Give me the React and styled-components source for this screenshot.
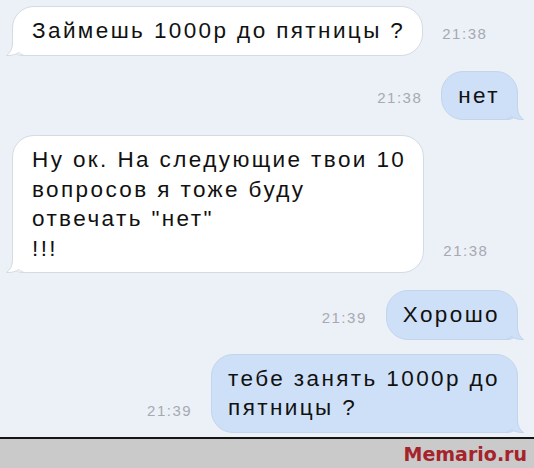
import React from 'react';
import styled, { createGlobalStyle } from 'styled-components';

const GlobalStyle = createGlobalStyle`
  html, body { margin: 0; padding: 0; }
  body {
    width: 534px;
    height: 468px;
    overflow: hidden;
    background: #ecf0f7;
    font-family: "Liberation Sans", Arial, sans-serif;
  }
`;

const Screen = styled.div`
  width: 534px;
  height: 468px;
  display: flex;
  flex-direction: column;
  background: #ecf0f7;
`;

const Chat = styled.div`
  flex: 1;
  display: flex;
  flex-direction: column;
  padding-top: 6px;
`;

const Row = styled.div`
  display: flex;
  align-items: flex-end;
  justify-content: ${(p) => (p.$out ? 'flex-end' : 'flex-start')};
  gap: 19px;
  margin-top: ${(p) => p.$gap || 0}px;
  padding: ${(p) => (p.$out ? '0 16px 0 0' : '0 0 0 12px')};
`;

const Bubble = styled.div`
  position: relative;
  box-sizing: border-box;
  padding: 9px 17px 9px ${(p) => (p.$out ? 16 : 19)}px;
  border: 1px solid ${(p) => (p.$out ? '#c3d5ec' : '#d5dbe4')};
  background: ${(p) => (p.$out ? '#cee0f7' : '#ffffff')};
  border-radius: 22px;
  ${(p) => (p.$out ? 'border-bottom-right-radius: 10px;' : 'border-bottom-left-radius: 10px;')}
  font-size: 22.5px;
  line-height: 29.5px;
  letter-spacing: 2.4px;
  color: #111111;
  white-space: pre-line;
`;

const Tail = styled.svg`
  position: absolute;
  bottom: -1px;
  width: 20px;
  height: 22px;
  ${(p) => (p.$out ? 'right: -7px; transform: scaleX(-1);' : 'left: -7px;')}
`;

const Time = styled.span`
  font-size: 15px;
  line-height: 16px;
  letter-spacing: 1.5px;
  color: #a5aab1;
  margin-bottom: 14px;
  white-space: nowrap;
`;

const Footer = styled.div`
  border-top: 2px solid #151515;
  background: #cacaca;
  display: flex;
  justify-content: flex-end;
  padding: 2px 7px 0 0;
  box-sizing: border-box;
  height: 31px;
`;

const Brand = styled.span`
  font-family: "DejaVu Sans", Verdana, sans-serif;
  font-weight: bold;
  font-size: 19px;
  line-height: 27px;
  color: #a5232b;
`;

function BubbleTail({ out }) {
  const fill = out ? '#cee0f7' : '#ffffff';
  const stroke = out ? '#c3d5ec' : '#d5dbe4';
  return (
    <Tail $out={out} viewBox="0 0 20 22" aria-hidden="true">
      <path
        d="M6.5 0 V9 C6.5 15 4 19 0.5 21.5 C5 21.8 10 20.5 13 18.5 C15 20.5 17 21.5 20 21.5 L20 0 Z"
        fill={fill}
      />
      <path
        d="M6.5 0 V9 C6.5 15 4 19 0.5 21.5 C5 21.8 10 20.5 13 18.5 C15 20.5 17 21.5 20 21.5"
        fill="none"
        stroke={stroke}
        strokeWidth="1"
      />
    </Tail>
  );
}

function Message({ out, time, gap, children }) {
  return (
    <Row $out={out} $gap={gap}>
      {out && <Time>{time}</Time>}
      <Bubble $out={out}>
        {children}
        <BubbleTail out={out} />
      </Bubble>
      {!out && <Time>{time}</Time>}
    </Row>
  );
}

export default function App() {
  return (
    <>
      <GlobalStyle />
      <Screen>
        <Chat>
          <Message time="21:38">Займешь 1000р до пятницы ?</Message>
          <Message out time="21:38" gap={15}>нет</Message>
          <Message time="21:38" gap={15}>
            {'Ну ок. На следующие твои 10\nвопросов я тоже буду\nотвечать "нет"\n!!!'}
          </Message>
          <Message out time="21:39" gap={17}>Хорошо</Message>
          <Message out time="21:39" gap={14}>
            {'тебе занять 1000р до\nпятницы ?'}
          </Message>
        </Chat>
        <Footer>
          <Brand>Memario.ru</Brand>
        </Footer>
      </Screen>
    </>
  );
}
